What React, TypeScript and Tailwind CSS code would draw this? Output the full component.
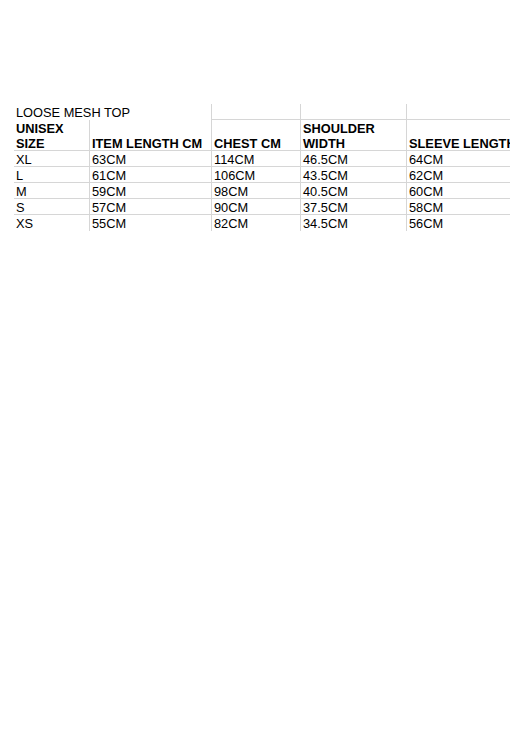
const rows = [
  ["XL", "63CM", "114CM", "46.5CM", "64CM"],
  ["L", "61CM", "106CM", "43.5CM", "62CM"],
  ["M", "59CM", "98CM", "40.5CM", "60CM"],
  ["S", "57CM", "90CM", "37.5CM", "58CM"],
  ["XS", "55CM", "82CM", "34.5CM", "56CM"],
];

const font = { fontFamily: '"Liberation Sans", Arial, sans-serif' };

export default function App() {
  return (
    <div className="w-[510px] h-[740px] overflow-hidden bg-white pt-[104px] pl-[14px]" style={font}>
      <div className="grid grid-cols-[75px_122px_89px_106px_220px] text-[12.8px] leading-[15px] text-black">
        {/* title row */}
        <div className="col-span-2 h-[16px] px-[2px] pt-[2px] leading-[13px] whitespace-nowrap">LOOSE MESH TOP</div>
        <div className="h-[16px] border-l border-b border-[#d6d6d6]" />
        <div className="h-[16px] border-l border-b border-[#d6d6d6]" />
        <div className="h-[16px] border-l border-b border-[#d6d6d6]" />

        {/* header row */}
        <div className="h-[31px] flex items-end px-[2px] font-bold border-b border-[#d6d6d6]">
          <span className="-mb-[1px]">
            UNISEX
            <br />
            SIZE
          </span>
        </div>
        <div className="h-[31px] flex items-end px-[2px] font-bold whitespace-nowrap border-l border-b border-[#d6d6d6]">
          <span className="-mb-[1px]">ITEM LENGTH CM</span>
        </div>
        <div className="h-[31px] flex items-end px-[2px] font-bold whitespace-nowrap border-l border-b border-[#d6d6d6]">
          <span className="-mb-[1px]">CHEST CM</span>
        </div>
        <div className="h-[31px] flex items-end px-[2px] font-bold border-l border-b border-[#d6d6d6]">
          <span className="-mb-[1px]">
            SHOULDER
            <br />
            WIDTH
          </span>
        </div>
        <div className="h-[31px] flex items-end px-[2px] font-bold whitespace-nowrap border-l border-b border-[#d6d6d6]">
          <span className="-mb-[1px]">SLEEVE LENGTH CM</span>
        </div>

        {/* data */}
        {rows.map((r, i) => {
          const last = i === rows.length - 1;
          return r.map((v, j) => (
            <div
              key={`${i}-${j}`}
              className={
                "h-[16px] px-[2px] pt-[2px] leading-[13px] whitespace-nowrap border-[#d6d6d6] " +
                (j > 0 ? "border-l " : "") +
                (last ? "" : "border-b")
              }
            >
              {v}
            </div>
          ));
        })}
      </div>
    </div>
  );
}
